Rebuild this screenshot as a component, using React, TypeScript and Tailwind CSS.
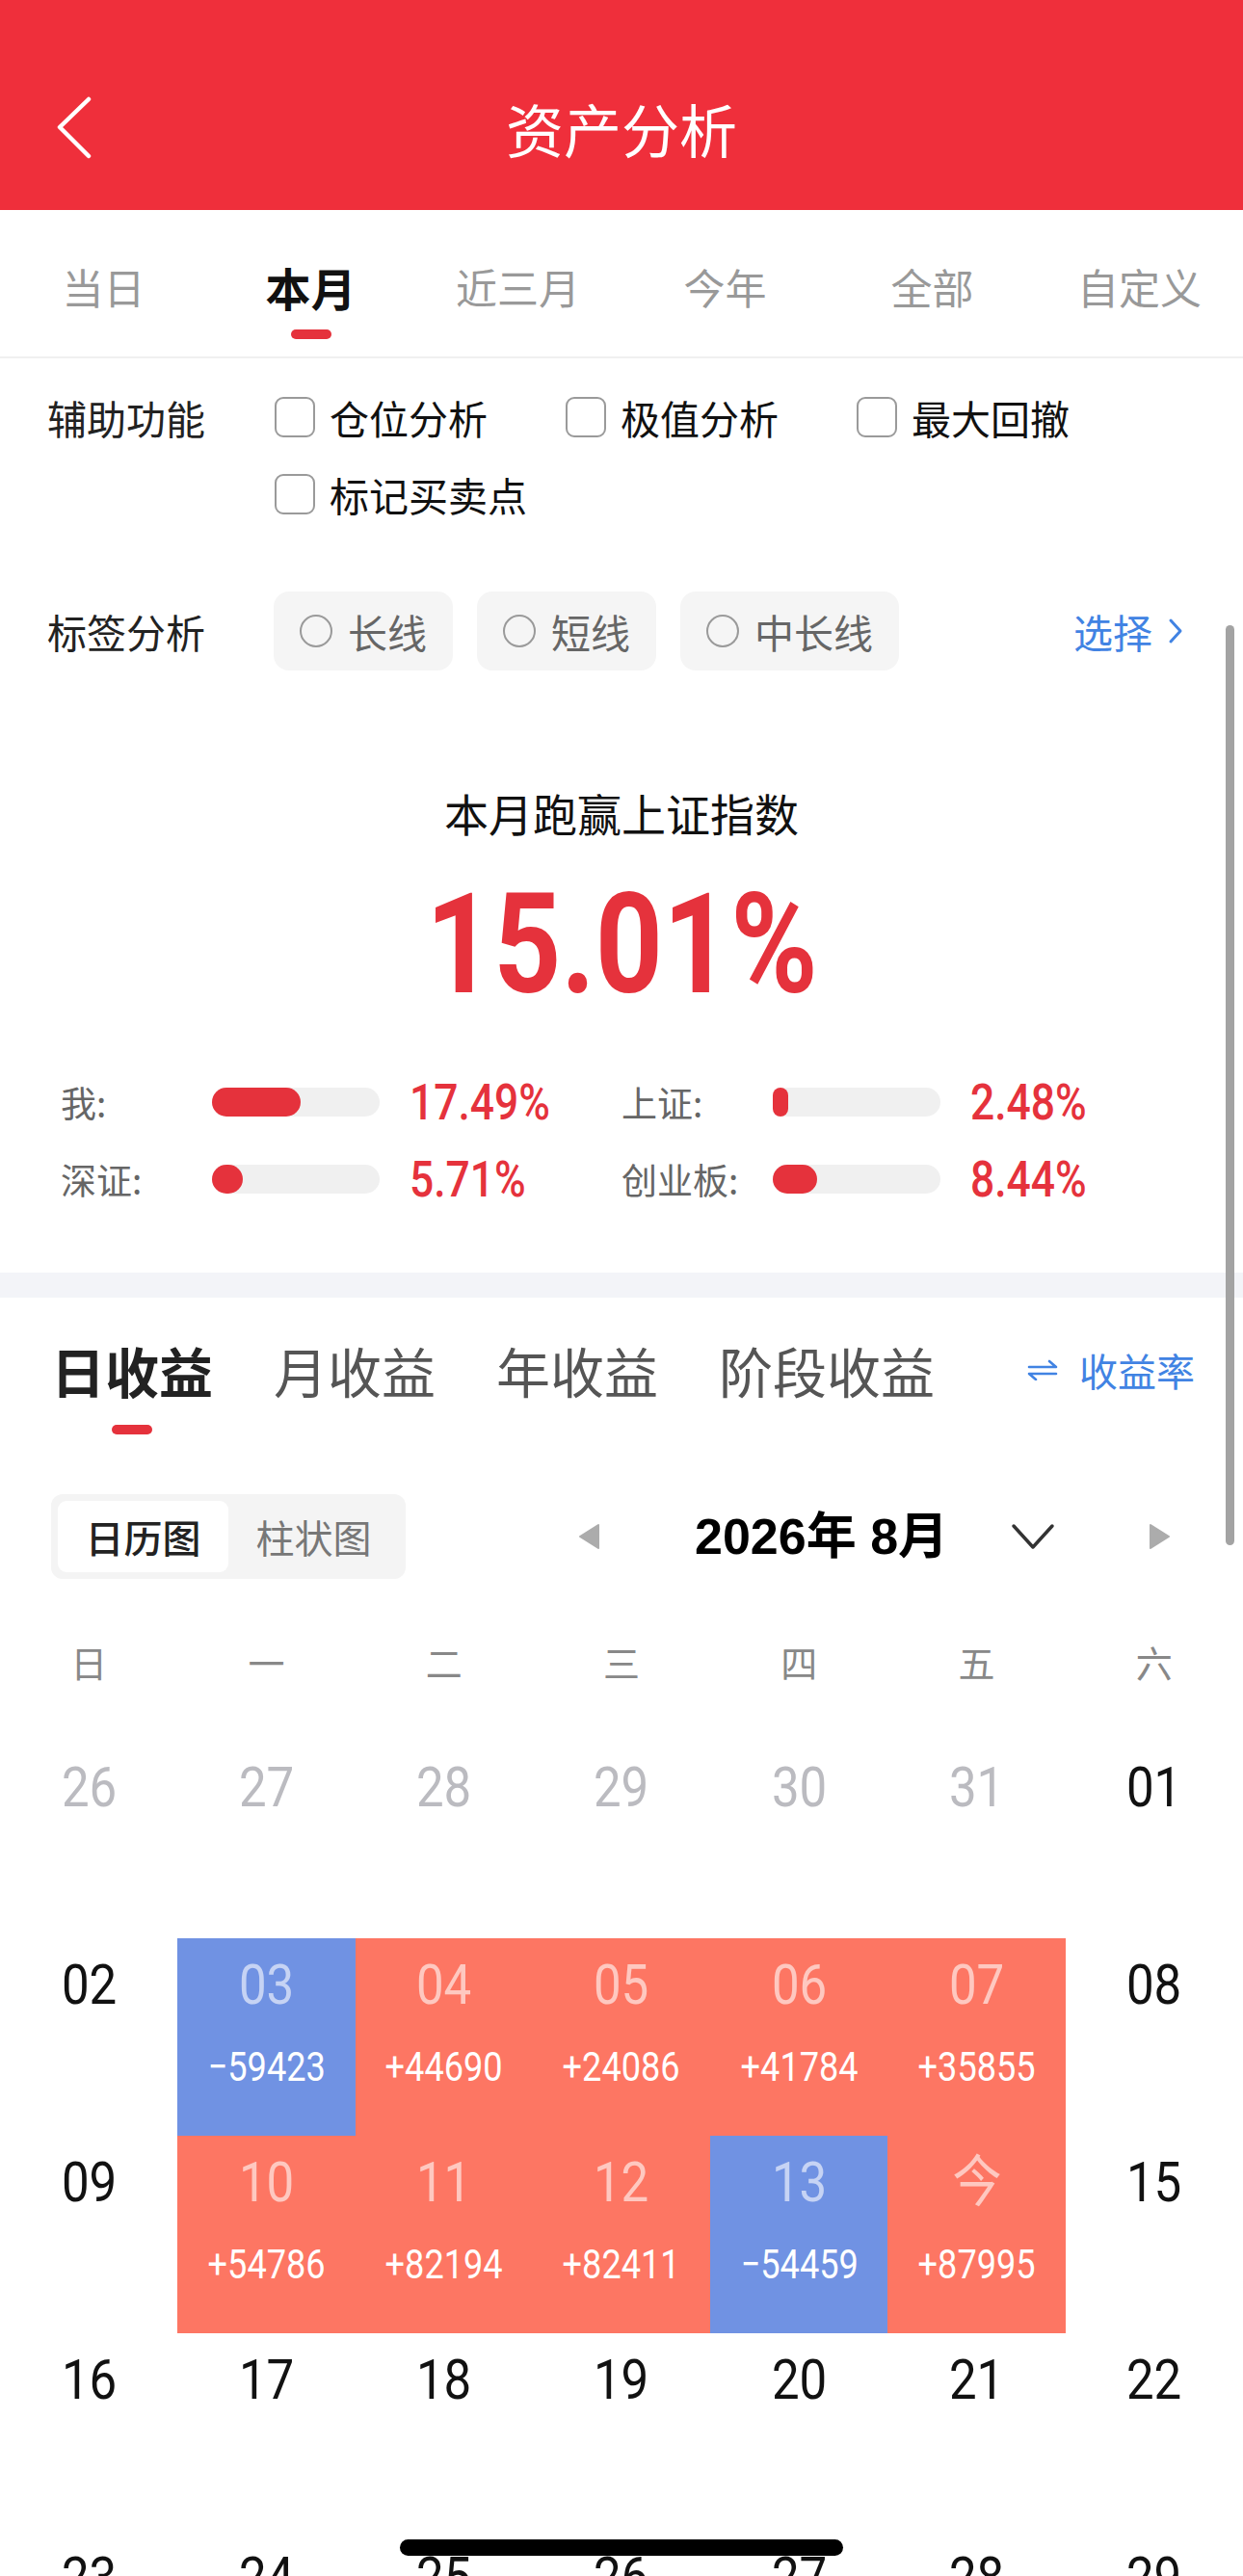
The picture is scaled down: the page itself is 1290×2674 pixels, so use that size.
const cjk = "font-['Noto_Sans_CJK_SC',sans-serif]";
const num = "font-['Roboto','Noto_Sans_CJK_SC',sans-serif]";

type Cell = { d: string; tone?: "prev" | "red" | "blue"; v?: string };

const weeks: Cell[][] = [
  [
    { d: "26", tone: "prev" },
    { d: "27", tone: "prev" },
    { d: "28", tone: "prev" },
    { d: "29", tone: "prev" },
    { d: "30", tone: "prev" },
    { d: "31", tone: "prev" },
    { d: "01" },
  ],
  [
    { d: "02" },
    { d: "03", tone: "blue", v: "−59423" },
    { d: "04", tone: "red", v: "+44690" },
    { d: "05", tone: "red", v: "+24086" },
    { d: "06", tone: "red", v: "+41784" },
    { d: "07", tone: "red", v: "+35855" },
    { d: "08" },
  ],
  [
    { d: "09" },
    { d: "10", tone: "red", v: "+54786" },
    { d: "11", tone: "red", v: "+82194" },
    { d: "12", tone: "red", v: "+82411" },
    { d: "13", tone: "blue", v: "−54459" },
    { d: "今", tone: "red", v: "+87995" },
    { d: "15" },
  ],
  [
    { d: "16" },
    { d: "17" },
    { d: "18" },
    { d: "19" },
    { d: "20" },
    { d: "21" },
    { d: "22" },
  ],
  [
    { d: "23" },
    { d: "24" },
    { d: "25" },
    { d: "26" },
    { d: "27" },
    { d: "28" },
    { d: "29" },
  ],
];

const bars = [
  { label: "我:", fill: 92, value: "17.49%" },
  { label: "上证:", fill: 16, value: "2.48%" },
  { label: "深证:", fill: 32, value: "5.71%" },
  { label: "创业板:", fill: 46, value: "8.44%" },
];

function Checkbox({ text }: { text: string }) {
  return (
    <div className="flex items-center h-[60px] gap-[15px]">
      <div className="w-[42px] h-[42px] rounded-[9px] border-[2.5px] border-[#9a9a9a] bg-white" />
      <span className="text-[41px] leading-none text-[#111]">{text}</span>
    </div>
  );
}

function Chip({ text }: { text: string }) {
  return (
    <div className="flex items-center h-[82px] px-[27px] gap-[16px] rounded-[16px] bg-[#f5f5f5]">
      <div className="w-[34px] h-[34px] rounded-full border-[2.5px] border-[#9a9a9a]" />
      <span className="text-[41px] leading-none text-[#666]">{text}</span>
    </div>
  );
}

export default function App() {
  return (
    <div className={`relative w-[1290px] h-[2674px] overflow-hidden bg-white ${cjk}`}>
      {/* header */}
      <div className="h-[218px] bg-[#ef2f3b] pt-[89px]">
        <div className="grid grid-cols-[1fr_auto_1fr] items-center h-[88px]">
          <div className="pl-[58px]">
            <svg width="40" height="66" viewBox="0 0 40 66" fill="none">
              <polyline points="34,3 4,32 34,62" stroke="white" strokeWidth="4.5" strokeLinecap="round" strokeLinejoin="round" />
            </svg>
          </div>
          <div className="text-white text-[60px] leading-none">资产分析</div>
          <div />
        </div>
      </div>

      {/* period tabs */}
      <div className="grid grid-cols-6 h-[154px] border-b-2 border-[#f0f0f0]">
        {["当日", "本月", "近三月", "今年", "全部", "自定义"].map((t) => (
          <div key={t} className="flex flex-col items-center pt-[56px]">
            <span className={`h-[46px] flex items-center leading-none ${t === "本月" ? "text-[47px] text-[#111] font-bold" : "text-[43px] text-[#999]"}`}>{t}</span>
            {t === "本月" && <div className="mt-[22px] w-[42px] h-[10px] rounded-full bg-[#e5323c]" />}
          </div>
        ))}
      </div>

      {/* auxiliary options */}
      <div className="pt-[31px]">
        <div className="flex">
          <div className="w-[285px] pl-[49px] h-[60px] flex items-center text-[41px] leading-none text-[#222]">辅助功能</div>
          <div className="grid grid-cols-[302px_302px_302px] gap-y-[20px]">
            <Checkbox text="仓位分析" />
            <Checkbox text="极值分析" />
            <Checkbox text="最大回撤" />
            <Checkbox text="标记买卖点" />
          </div>
        </div>
        <div className="flex items-center mt-[71px]">
          <div className="w-[284px] pl-[49px] text-[41px] leading-none text-[#222]">标签分析</div>
          <div className="flex gap-[25px]">
            <Chip text="长线" />
            <Chip text="短线" />
            <Chip text="中长线" />
          </div>
          <div className="ml-auto pr-[62px] flex items-center gap-[16px] text-[#4183e3]">
            <span className="text-[41px] leading-none">选择</span>
            <svg width="16" height="28" viewBox="0 0 16 28" fill="none">
              <polyline points="3,3 13,14 3,25" stroke="#4183e3" strokeWidth="3" strokeLinecap="round" strokeLinejoin="round" />
            </svg>
          </div>
        </div>
      </div>

      {/* benchmark */}
      <div className="mt-[117px] flex flex-col items-center">
        <div className="h-[60px] flex items-center text-[46px] text-[#111]">本月跑赢上证指数</div>
        <div className={`mt-[36px] inline-block scale-x-[0.85] text-[144px] leading-none font-bold text-[#e5323c] ${num}`}>15.01%</div>
      </div>
      <div className="mt-[61px] pl-[63px] grid grid-cols-[582px_582px] gap-y-[20px]">
        {bars.map((b) => (
          <div key={b.label} className="flex items-center h-[60px]">
            <span className="w-[157px] text-[37px] leading-none text-[#666]">{b.label}</span>
            <div className="w-[174px] h-[30px] rounded-full bg-[#f0f0f0]">
              <div className="h-[30px] rounded-full bg-[#e5323c]" style={{ width: `${b.fill}px` }} />
            </div>
            <span className={`ml-[31px] inline-block origin-left scale-x-[0.87] text-[51px] leading-none font-medium text-[#e5323c] ${num}`}>{b.value}</span>
          </div>
        ))}
      </div>

      <div className="mt-[67px] h-[26px] bg-[#f3f4f8]" />

      {/* earnings tabs */}
      <div className="flex items-start pt-[40px] pl-[53px] pr-[50px]">
        <div className="flex gap-[63px]">
          {["日收益", "月收益", "年收益", "阶段收益"].map((t, i) => (
            <div key={t} className="flex flex-col items-center">
              <span className={`h-[70px] flex items-center text-[56px] leading-none ${i === 0 ? "text-[#222] font-bold" : "text-[#555]"}`}>{t}</span>
              {i === 0 && <div className="mt-[22px] w-[42px] h-[10px] rounded-full bg-[#e5323c]" />}
            </div>
          ))}
        </div>
        <div className="ml-auto h-[70px] flex items-center gap-[22px] text-[#4183e3]">
          <svg width="32" height="22" viewBox="0 0 32 22" fill="none">
            <path d="M2 8 H30 L23 2" stroke="#4183e3" strokeWidth="2.6" strokeLinecap="round" strokeLinejoin="round" />
            <path d="M30 15 H2 L9 21" stroke="#4183e3" strokeWidth="2.6" strokeLinecap="round" strokeLinejoin="round" />
          </svg>
          <span className="text-[40px] leading-none">收益率</span>
        </div>
      </div>

      {/* view switch + month */}
      <div className="mt-[62px] flex items-center h-[88px]">
        <div className="ml-[53px] w-[368px] h-[88px] rounded-[12px] bg-[#f4f4f4] p-[7px] flex">
          <div className="w-[177px] rounded-[9px] bg-white flex items-center justify-center text-[40px] font-medium text-[#222]">日历图</div>
          <div className="w-[177px] flex items-center justify-center text-[40px] text-[#777]">柱状图</div>
        </div>
        <svg className="ml-[178px]" width="24" height="28" viewBox="0 0 24 28">
          <path d="M22 2 L3 14 L22 26 Z" fill="#acacac" stroke="#acacac" strokeWidth="2" strokeLinejoin="round" />
        </svg>
        <div className="w-[426px] pl-[98px] text-[52px] leading-none font-bold text-black font-['Liberation_Sans','Noto_Sans_CJK_SC',sans-serif]">2026年 8月</div>
        <svg width="46" height="30" viewBox="0 0 46 30" fill="none">
          <polyline points="3,4 23,26 43,4" stroke="#333" strokeWidth="3.5" strokeLinecap="round" strokeLinejoin="round" />
        </svg>
        <svg className="ml-[97px]" width="24" height="28" viewBox="0 0 24 28">
          <path d="M2 2 L21 14 L2 26 Z" fill="#acacac" stroke="#acacac" strokeWidth="2" strokeLinejoin="round" />
        </svg>
      </div>

      {/* calendar */}
      <div className="mt-[55px] grid grid-cols-7 h-[60px] items-center text-center text-[38px] text-[#888]">
        {["日", "一", "二", "三", "四", "五", "六"].map((w) => (
          <span key={w}>{w}</span>
        ))}
      </div>
      <div className="mt-[53px]">
        {weeks.map((row, ri) => (
          <div key={ri} className="grid grid-cols-7">
            {row.map((c, ci) => {
              const bg = c.tone === "red" ? "bg-[#fd7663]" : c.tone === "blue" ? "bg-[#7092e3]" : "bg-white";
              const color =
                c.tone === "prev" ? "text-[#bbbbc0]" : c.tone === "red" || c.tone === "blue" ? "text-white/60" : "text-[#111]";
              return (
                <div key={ci} className={`h-[205px] flex flex-col items-center ${bg}`}>
                  <span className={`mt-[18px] h-[60px] flex items-center scale-x-[0.88] text-[58px] leading-none ${num} ${color}`}>{c.d}</span>
                  {c.v && <span className={`mt-[30px] h-[50px] flex items-center scale-x-[0.84] text-[43px] leading-none text-white ${num}`}>{c.v}</span>}
                </div>
              );
            })}
          </div>
        ))}
      </div>

      {/* scroll indicator */}
      <div className="absolute left-[1272px] top-[649px] w-[9px] h-[955px] rounded-full bg-[#a3a3a3]" />
      {/* home indicator */}
      <div className="absolute left-[415px] top-[2636px] w-[460px] h-[17px] rounded-full bg-black" />
    </div>
  );
}
